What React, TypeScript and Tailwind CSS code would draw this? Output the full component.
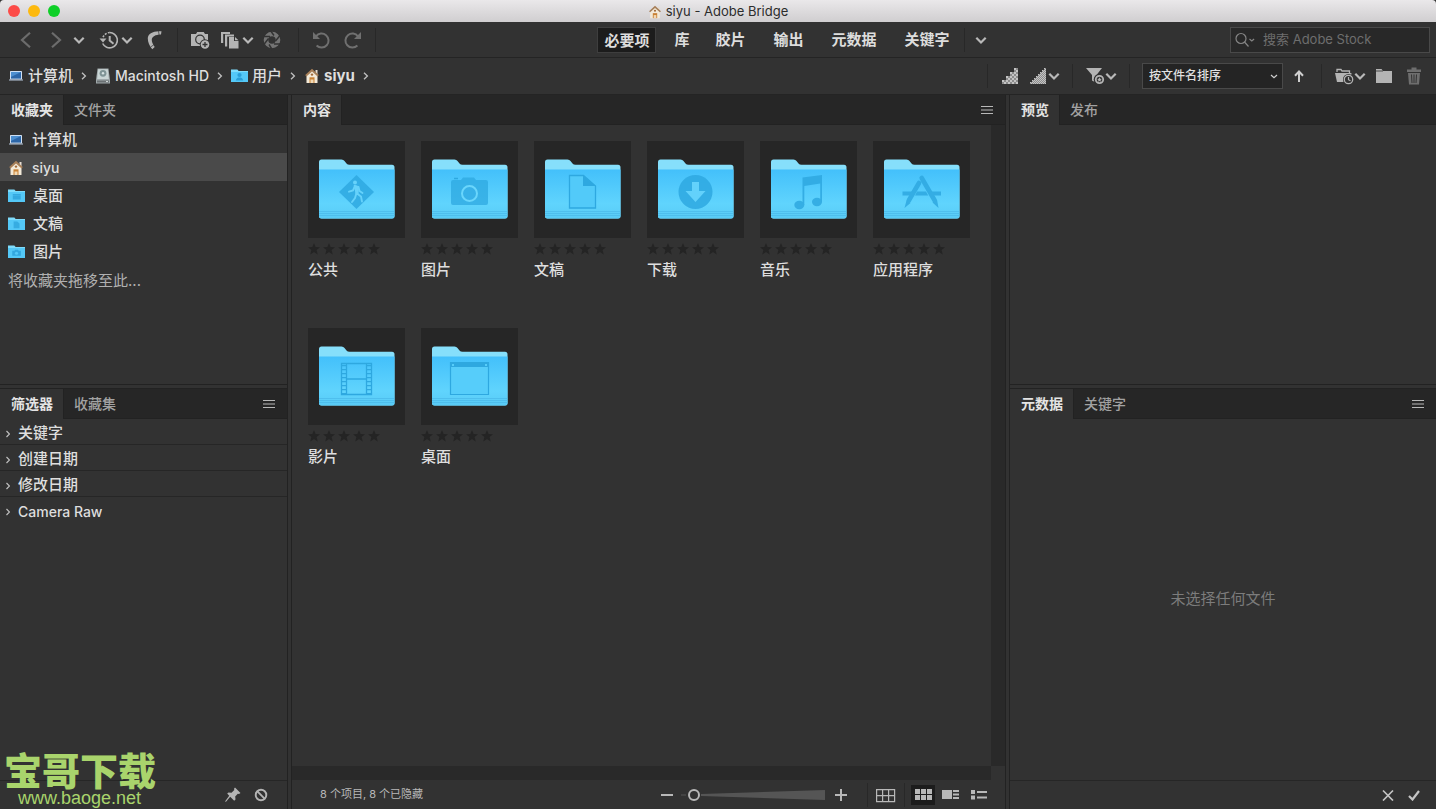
import React from "react";

type Kind = "public" | "pictures" | "documents" | "downloads" | "music" | "apps" | "movies" | "desktop";

const Chevron = () => (
  <svg className="w-3 h-3 shrink-0 text-[#b9b9b9]" viewBox="0 0 12 12" fill="none" stroke="currentColor" strokeWidth="2.2" aria-hidden="true">
    <path d="M1.3 3.8 6 8.5l4.7-4.7" />
  </svg>
);

const Sep = ({ className = "" }: { className?: string }) => <span className={`w-px h-6 shrink-0 bg-[#282828] ${className}`} />;

const IconButton = ({ label, className = "", children }: { label: string; className?: string; children: React.ReactNode }) => (
  <button type="button" aria-label={label} className={`flex shrink-0 items-center justify-center ${className}`}>
    {children}
  </button>
);

const House = ({ className = "w-4 h-4" }: { className?: string }) => (
  <svg className={`shrink-0 ${className}`} viewBox="0 0 16 16" aria-hidden="true">
    <path d="M11.5 2h2v4h-2z" fill="#e6ddd2" />
    <path d="M2.5 7 8 2.5 13.500 7v8h-11z" fill="#f3ead9" />
    <path d="M8 .8 14.8 7l-1.2 1.4L8 3.4 2.4 8.4 1.2 7z" fill="#a77f58" />
    <path d="M5.500 15V9.3h5V15z" fill="#c98235" />
    <path d="M6.500 11.500h3V15h-3z" fill="#f0d9b5" />
    <circle cx="8" cy="6.6" r="1.2" fill="#a06b3c" />
  </svg>
);

const Computer = () => (
  <svg className="w-4 h-4 shrink-0" viewBox="0 0 16 16" aria-hidden="true">
    <rect x="2" y="3" width="12" height="8.5" rx=".6" fill="#cfe0f3" />
    <rect x="3" y="4" width="10" height="6.6" fill="#2c66a8" />
    <path d="M3 4h10L3 9z" fill="#4d8fd0" />
    <path d="M1 11.5h14v1H1z" fill="#b8c8dc" />
  </svg>
);

const Disk = () => (
  <svg className="w-4 h-4 shrink-0" viewBox="0 0 16 16" aria-hidden="true">
    <path d="M2.5.5h11L15 12v3.5H1V12z" fill="#9fa8aa" />
    <path d="M3.2 1.2h9.6l1 9.8H2.2z" fill="#c9d5d5" />
    <circle cx="8" cy="5.3" r="3.4" fill="#7f9496" />
    <circle cx="8" cy="5.3" r="1.2" fill="#d8e4e4" />
    <path d="M2 12.5h12v2H2z" fill="#6a7072" />
    <path d="M11 13h2v1h-2z" fill="#cfd6d6" />
  </svg>
);

const MiniFolder = ({ kind }: { kind: "users" | "desktop" | "documents" | "pictures" }) => (
  <svg className="w-[17px] h-4 shrink-0" viewBox="0 0 16 16" preserveAspectRatio="none" aria-hidden="true">
    <path d="M0 1.5h6L7.2 3H16v11H0z" fill="#7fdcfb" />
    <path d="M0 4h16v10H0z" fill="#54c8f7" />
    <g fill="#2a9fd8">
      {kind === "users" && (
        <>
          <circle cx="8" cy="7" r="2" />
          <path d="M4.5 12.5C5 10 6.5 9.5 8 9.5s3 .5 3.5 3z" />
        </>
      )}
      {kind === "desktop" && <path d="M4.5 6h7.500v1.400H4.500zM4.500 7.800h7.500v3.600H4.500z" opacity=".75" />}
      {kind === "documents" && <path d="M5.300 5.500h3.400L10.800 7.600v4.600H5.300z" opacity=".7" />}
      {kind === "pictures" && (
        <>
          <path d="M4 6.800h2l.8-1h2.500l.8 1h2v5H4z" opacity=".8" />
          <circle cx="8" cy="9.200" r="1.500" fill="#54c8f7" />
        </>
      )}
    </g>
  </svg>
);

const Emblem = ({ kind }: { kind: Kind }) => {
  const ink = "#2ea8e0";
  switch (kind) {
    case "public":
      return (
        <>
          <path d="M48.500 34 66 51 48.500 68 31 51z" fill={ink} opacity=".85" />
          <circle cx="47" cy="41.500" r="2" fill="#66d2fb" />
          <path d="m46.500 45 4 1 1 4 3 2M47 45l-2 4.500-4 1.200M48.500 46l.5 6.500 4 3 1 5M48.500 52l-1.500 5-3 4" stroke="#66d2fb" strokeWidth="1.900" fill="none" strokeLinecap="round" />
          <path d="m46 44 5 1.500-.5 7.500h-3z" fill="#66d2fb" />
        </>
      );
    case "pictures":
      return (
        <>
          <path d="M30 41q0-2 2-2h8l2-2.500h11l2 2.500h10q2 0 2 2v21q0 2-2 2H32q-2 0-2-2z" fill={ink} opacity=".75" />
          <path d="M33 37.500h4" stroke={ink} strokeWidth="1.500" />
          <circle cx="48.500" cy="52.500" r="7.500" fill="#38b1e8" stroke="#6ad6fc" strokeWidth="2" />
        </>
      );
    case "documents":
      return (
        <>
          <path d="M35.500 34.500h14L61.500 45v22h-26z" fill="#52caf9" stroke={ink} strokeWidth="1.300" />
          <path d="M49 34.500V45h12.500z" fill={ink} />
        </>
      );
    case "downloads":
      return (
        <>
          <circle cx="48.500" cy="51" r="17" fill={ink} opacity=".85" />
          <path d="M45 41h7v9h6.500l-10 11-10-11H45z" fill="#63d1fb" />
        </>
      );
    case "music":
      return (
        <g fill={ink} opacity=".85">
          <path d="M42.500 36.500 62 34v27h-1.800V42.500L44.300 45v19h-1.800z" />
          <ellipse cx="39.300" cy="64" rx="5" ry="4.200" />
          <ellipse cx="57" cy="61" rx="5" ry="4.200" />
        </g>
      );
    case "apps":
      return (
        <g opacity=".85">
          <path d="M29.500 50.500H40l-2.200 4h-8.300zM44 50.500h9l2.200 4H42zM58 50.500h10v4h-7.800z" fill={ink} />
          <path d="M46 42 35.800 59.500M48.700 37l13 22.500" stroke={ink} strokeWidth="4.600" strokeLinecap="round" fill="none" />
          <path d="m33.500 59.500-2 7.500 6-5zM59.500 61.500l6 5.500-1.500-8.500z" fill={ink} />
        </g>
      );
    case "movies":
      return (
        <g stroke={ink} fill="none">
          <path d="M33.500 35.500h30v31h-30zM38.500 35v32M58.500 35v32M38.500 51h20" strokeWidth="1.300" />
          <path d="M36 37v29M61 37v29" strokeWidth="4" strokeDasharray="1.200 2.800" />
        </g>
      );
    default:
      return (
        <>
          <path d="M29.500 34.500h38v32h-38z" fill="#56cdfa" stroke={ink} strokeWidth="1.200" />
          <path d="M29 34h39v5H29z" fill={ink} />
          <path d="M31 36h2v2h-2zM64 36h2v2h-2z" fill="#56cdfa" />
        </>
      );
  }
};

const Folder = ({ kind }: { kind: Kind }) => (
  <svg className="w-full h-full" viewBox="0 0 97 97" aria-hidden="true">
    <defs>
      <linearGradient id={`face-${kind}`} x1="0" y1="0" x2="0" y2="1">
        <stop offset="0" stopColor="#43c0fb" />
        <stop offset=".7" stopColor="#60d4fd" />
        <stop offset="1" stopColor="#58cbf6" />
      </linearGradient>
    </defs>
    <path d="M11 21q0-2.500 2.500-2.500h20q2 0 3 1.500l2 2.500q1 1.300 3 1.300h42.500q2.500 0 2.500 2.500V75q0 2.500-2.500 2.500h-70.500Q11 77.500 11 75z" fill="#86dffb" />
    <path d="M11 28.500h75.500V75q0 2.500-2.500 2.500h-70.500Q11 77.500 11 75z" fill={`url(#face-${kind})`} />
    <path d="M11 70.500h75.500M11 72.500h75.500M11 74.500h75.500" stroke="#46b4e6" strokeWidth=".6" />
    <Emblem kind={kind} />
  </svg>
);

const Stars = () => (
  <div className="flex h-[22px] items-center gap-[3px] text-[#242424]" role="img" aria-label="未评级">
    {[0, 1, 2, 3, 4].map((n) => (
      <svg key={n} className="w-3 h-3" viewBox="0 0 12 12" fill="currentColor">
        <path d="m6 0 1.600 4.100 4.400.2-3.400 2.800L9.700 11.500 6 9.100 2.300 11.500l1.100-4.400L0 4.300l4.400-.2z" />
      </svg>
    ))}
  </div>
);

const MenuButton = () => (
  <IconButton label="面板菜单" className="h-5 w-5 text-[#b8b8b8]">
    <svg className="w-3 h-3" viewBox="0 0 12 12" stroke="currentColor" strokeWidth="1" aria-hidden="true">
      <path d="M0 2.500h12M0 6h12M0 9.500h12" />
    </svg>
  </IconButton>
);

const Tabs = ({ names, menu }: { names: string[]; menu?: boolean }) => (
  <div className="flex h-[30px] shrink-0 border-b border-[#222222] bg-[#262626]">
    <div role="tablist" className="flex flex-1">
      {names.map((name, i) =>
        i === 0 ? (
          <button key={name} role="tab" aria-selected="true" type="button" className="-mb-px border-r border-[#222222] bg-[#323232] pl-[11px] pr-2.5 text-sm font-bold text-[#e4e4e4]">
            {name}
          </button>
        ) : (
          <button key={name} role="tab" aria-selected="false" type="button" className="px-2.5 text-sm font-medium text-[#a2a2a2]">
            {name}
          </button>
        )
      )}
    </div>
    {menu && (
      <div className="flex items-center pr-2">
        <MenuButton />
      </div>
    )}
  </div>
);

const Crumb = ({ icon, children }: { icon: React.ReactNode; children: React.ReactNode }) => (
  <li className="flex items-center">
    <a href="#" className="flex items-center gap-1">
      {icon}
      {children}
    </a>
    <svg className="mx-2 h-2 w-1.5 text-[#c0c0c0]" viewBox="0 0 6 8" fill="none" stroke="currentColor" strokeWidth="1.300" aria-hidden="true">
      <path d="m1 .8 3.400 3.200L1 7.200" />
    </svg>
  </li>
);

const stair = (step: number, size: number) => {
  const cells: React.ReactNode[] = [];
  for (let y = 0; y < 16; y += size) {
    for (let x = 0; x < 16; x += size) {
      const top = 16 - (Math.floor(x / step) + 1) * step;
      if (y >= top) {
        const lit = (x / size + y / size) % 2 === 0;
        cells.push(<rect key={`${x}-${y}`} x={x} y={y} width={size} height={size} fill={lit ? "#c4c4c4" : "#8c8c8c"} />);
      }
    }
  }
  return cells;
};

const Undo = ({ flip }: { flip?: boolean }) => (
  <svg className="w-[18px] h-[18px]" viewBox="0 0 18 18" fill="none" stroke="currentColor" strokeWidth="2" aria-hidden="true">
    <g transform={flip ? "translate(18 0) scale(-1 1)" : undefined}>
      <path d="M4 5.300A7 7 0 1 1 4.600 14.500" />
      <path d="M1 1v7h7z" fill="currentColor" stroke="none" />
    </g>
  </svg>
);

const items: { name: string; kind: Kind }[] = [
  { name: "公共", kind: "public" },
  { name: "图片", kind: "pictures" },
  { name: "文稿", kind: "documents" },
  { name: "下载", kind: "downloads" },
  { name: "音乐", kind: "music" },
  { name: "应用程序", kind: "apps" },
  { name: "影片", kind: "movies" },
  { name: "桌面", kind: "desktop" },
];

const favorites: { name: string; icon: React.ReactNode }[] = [
  { name: "计算机", icon: <Computer /> },
  { name: "siyu", icon: <House /> },
  { name: "桌面", icon: <MiniFolder kind="desktop" /> },
  { name: "文稿", icon: <MiniFolder kind="documents" /> },
  { name: "图片", icon: <MiniFolder kind="pictures" /> },
];

const TitleBar = () => (
  <header className="relative flex h-[22px] shrink-0 items-center justify-center rounded-t bg-gradient-to-b from-[#eae8ea] to-[#d0ced0]">
    <div className="absolute left-2 flex gap-2">
      <button type="button" aria-label="关闭" className="h-3 w-3 rounded-full bg-[#fc4b48]" />
      <button type="button" aria-label="最小化" className="h-3 w-3 rounded-full bg-[#fdb90f]" />
      <button type="button" aria-label="缩放" className="h-3 w-3 rounded-full bg-[#0fcf28]" />
    </div>
    <h1 className="flex items-center gap-1 pt-0.5 text-[13px] text-[#2c2c2c]">
      <House className="w-3.5 h-3.5" />
      siyu - Adobe Bridge
    </h1>
  </header>
);

const Toolbar = () => (
  <div className="flex h-9 shrink-0 items-center justify-between border-b border-[#242424] pr-1.5">
    <div className="flex items-center pl-[11px] text-[#b4b4b4]">
      <IconButton label="后退" className="h-6 w-[30px] text-[#6c6c6c]">
        <svg className="w-4 h-4" viewBox="0 0 16 16" fill="none" stroke="currentColor" strokeWidth="2.200"><path d="M12 .8 4 8l8 7.200" /></svg>
      </IconButton>
      <IconButton label="前进" className="h-6 w-[30px] text-[#6c6c6c]">
        <svg className="w-4 h-4" viewBox="0 0 16 16" fill="none" stroke="currentColor" strokeWidth="2.200"><path d="m4 .8 8 7.200-8 7.200" /></svg>
      </IconButton>
      <IconButton label="转到父文件夹" className="h-6 w-4"><Chevron /></IconButton>
      <IconButton label="最近打开" className="ml-2.5 h-6">
        <svg className="w-6 h-6" viewBox="0 0 24 24" fill="none" stroke="currentColor" strokeWidth="1.600">
          <path d="M6 9.200A8 8 0 0 1 12.700 4.500" strokeDasharray="2 1.300" />
          <path d="M12.500 4.500a7.700 7.700 0 1 1-6.800 11" />
          <path d="M12.700 8v4.500l3.800 3.300" strokeWidth="2" />
          <path d="M2.500 10.500h7l-3.500 4z" fill="currentColor" stroke="none" />
        </svg>
        <Chevron />
      </IconButton>
      <IconButton label="返回 Photoshop" className="ml-2.5 h-6 w-6">
        <svg className="w-6 h-6" viewBox="0 0 24 24" fill="currentColor">
          <path d="M18.500 3.300C10.500 2.500 4.800 5.500 4.800 10.500c0 3.500 1.700 7.500 4.500 10.800l2.400-2.300C9.500 16 8.600 13.300 8.800 11.300c.3-2.800 3.700-5 9.200-4.900z" />
          <path d="m15.500 3.200.6 3.400M7.600 19l3.200-2.200" stroke="#323232" strokeWidth=".7" />
        </svg>
      </IconButton>
      <Sep className="ml-2.5" />
      <IconButton label="从相机获取照片" className="ml-2.5 h-6 w-6">
        <svg className="w-6 h-6" viewBox="0 0 24 24" fill="currentColor">
          <path d="M3 6h5l1.200-2h6.500L17 6h3v12H3z" />
          <circle cx="12" cy="11.500" r="4.300" fill="none" stroke="#323232" strokeWidth="1.200" />
          <circle cx="17" cy="16.500" r="5.200" fill="#323232" />
          <circle cx="17" cy="16.500" r="4.300" />
          <path d="M17 14v5M14.500 16.500h5" stroke="#323232" strokeWidth="1.300" />
        </svg>
      </IconButton>
      <IconButton label="优化" className="ml-1.5 h-6">
        <svg className="w-6 h-6" viewBox="0 0 24 24" fill="currentColor">
          <path d="M3 4h9v2H5.200v9H3zM7 6.500h9v2H9.200v10H7z" />
          <path d="M11 9h5v4h4.500v7.500H11z" />
          <path d="m17 9 3.500 3.300H17z" />
        </svg>
        <Chevron />
      </IconButton>
      <IconButton label="在 Camera Raw 中打开" className="ml-1.5 h-6 w-6 text-[#747474]">
        <svg className="w-6 h-6" viewBox="0 0 24 24" fill="none" stroke="currentColor">
          <circle cx="12" cy="12" r="6" strokeWidth="4.600" />
          <path d="m10 2 4 5.500M20 7.500 15.500 13M20.500 16H14M12.500 22 9 16.500M3.500 17l5-6.500M3.500 8.500H10" stroke="#323232" strokeWidth="1.400" />
        </svg>
      </IconButton>
      <Sep className="ml-3.5" />
      <IconButton label="逆时针旋转 90 度" className="ml-2.5 h-6 w-6 text-[#707070]"><Undo /></IconButton>
      <IconButton label="顺时针旋转 90 度" className="ml-2 h-6 w-6 text-[#707070]"><Undo flip /></IconButton>
      <Sep className="ml-2.5" />
    </div>
    <nav className="flex items-center pr-5 text-[15px] font-bold text-[#dddddd]">
      <button type="button" className="h-[26px] border border-[#3e3e3e] bg-[#1c1c1c] px-1.5 pt-0.5">必要项</button>
      {["库", "胶片", "输出", "元数据", "关键字"].map((n, i) => (
        <button key={n} type="button" className={i === 0 ? "ml-1.5 h-[26px] px-3 pt-0.5" : "h-[26px] px-3.5 pt-0.5"}>{n}</button>
      ))}
      <Sep />
      <IconButton label="更多工作区" className="ml-2 h-6 w-4"><Chevron /></IconButton>
    </nav>
    <div className="flex h-[26px] w-[200px] items-center gap-2 border border-[#494949] bg-[#282828] px-1 text-[#858585]">
      <svg className="w-5 h-4 shrink-0" viewBox="0 0 20 16" fill="none" stroke="currentColor" strokeWidth="1.200" aria-hidden="true">
        <circle cx="6" cy="6.500" r="5" />
        <path d="m9.500 10 4 4.500M14.500 7l2.300 2 2.300-2" />
      </svg>
      <input type="search" aria-label="搜索 Adobe Stock" placeholder="搜索 Adobe Stock" className="min-w-0 flex-1 bg-transparent text-[13px] outline-none placeholder:text-[#6e6e6e]" />
    </div>
  </div>
);

const PathBar = () => (
  <div className="flex h-[37px] shrink-0 items-center justify-between border-b border-[#242424] pl-2 pr-3">
    <nav aria-label="路径">
      <ol className="flex items-center text-[15px] font-medium text-[#dedede]">
        <Crumb icon={<Computer />}>计算机</Crumb>
        <Crumb icon={<Disk />}><span className="text-sm">Macintosh HD</span></Crumb>
        <Crumb icon={<MiniFolder kind="users" />}>用户</Crumb>
        <Crumb icon={<House />}><b>siyu</b></Crumb>
      </ol>
    </nav>
    <div className="flex items-center text-[#b4b4b4]">
      <Sep />
      <IconButton label="按评级筛选" className="ml-3 h-6 w-5">
        <svg className="w-4 h-4" viewBox="0 0 16 16">{stair(4, 2)}</svg>
      </IconButton>
      <IconButton label="缩览图品质" className="ml-2.5 h-6">
        <svg className="w-[18px] h-4" viewBox="0 0 18 16">{stair(2, 1)}</svg>
        <Chevron />
      </IconButton>
      <Sep className="ml-3" />
      <IconButton label="筛选项目" className="ml-3 h-6">
        <svg className="w-5 h-5" viewBox="0 0 20 20" fill="currentColor">
          <path d="M1 2h16l-5.500 7v8L7 14.500V9z" />
          <circle cx="14.500" cy="13.500" r="5.800" fill="#323232" />
          <circle cx="14.500" cy="13.500" r="3.700" fill="none" stroke="currentColor" strokeWidth="1.800" />
          <path d="m14.500 11.300.7 1.500 1.600.2-1.200 1.100.3 1.600-1.400-.8-1.400.8.300-1.600-1.200-1.100 1.600-.2z" />
        </svg>
        <Chevron />
      </IconButton>
      <Sep className="ml-3" />
      <div className="relative ml-3">
        <select aria-label="排序方式" className="block h-[26px] w-[141px] appearance-none border border-[#494949] bg-[#242424] px-1.5 text-xs font-medium text-[#e0e0e0] outline-none">
          <option>按文件名排序</option>
        </select>
        <svg className="pointer-events-none absolute right-1 top-2.5 h-2 w-2.5" viewBox="0 0 10 8" fill="none" stroke="#d0d0d0" strokeWidth="1.200" aria-hidden="true">
          <path d="m2 2 3 2.700L8 2" />
        </svg>
      </div>
      <IconButton label="升序" className="ml-1.5 h-6 w-5">
        <svg className="w-3 h-3" viewBox="0 0 12 12" fill="none" stroke="#cfcfcf" strokeWidth="2"><path d="M6 12V2M2 5.700 6 1.500l4 4.200" /></svg>
      </IconButton>
      <Sep className="ml-3" />
      <IconButton label="打开最近使用的文件" className="ml-3 h-6">
        <svg className="w-5 h-5" viewBox="0 0 20 20" fill="currentColor">
          <path d="M3 6V3.500h4l1 1.500h7.500V7" fill="none" stroke="currentColor" strokeWidth="1.300" />
          <path d="M1 7h16.500l-1.300 9H3z" />
          <circle cx="14.500" cy="13.500" r="5.500" fill="#323232" />
          <circle cx="14.500" cy="13.500" r="4.200" fill="none" stroke="currentColor" strokeWidth="1.300" />
          <path d="M14.500 11v2.700l2 1" fill="none" stroke="currentColor" strokeWidth="1.200" />
        </svg>
        <Chevron />
      </IconButton>
      <IconButton label="新建文件夹" className="ml-2 h-6 w-5">
        <svg className="w-4 h-4" viewBox="0 0 16 16" fill="currentColor"><path d="M0 1h5.500L7 3H16v12H0z" /><path d="M0 3h7" stroke="#323232" strokeWidth=".8" /></svg>
      </IconButton>
      <IconButton label="删除" className="ml-2.5 h-6 w-5 text-[#6e6e6e]">
        <svg className="w-4 h-[18px]" viewBox="0 0 16 18" fill="currentColor">
          <path d="M1 2.500h4.500V.5h5v2H15V5H1zM2 6h12l-1 11.500H3z" />
          <path d="M5.500 7.500 6 16M8 7.500V16M10.500 7.500 10 16" stroke="#323232" strokeWidth="1" />
        </svg>
      </IconButton>
    </div>
  </div>
);

const LeftColumn = () => (
  <aside className="flex w-72 shrink-0 flex-col border-r border-[#222222]">
    <section className="flex h-[290px] shrink-0 flex-col border-b border-[#222222]">
      <Tabs names={["收藏夹", "文件夹"]} />
      <ul className="text-[15px] font-medium text-[#dedede]">
        {favorites.map((f, i) => (
          <li key={f.name}>
            <button type="button" className={`flex h-7 w-full items-center gap-2 px-2 pt-0.5 text-left ${i === 1 ? "bg-[#4a4a4a]" : ""}`}>
              {f.icon}
              {i === 1 ? <span className="text-sm">{f.name}</span> : f.name}
            </button>
          </li>
        ))}
      </ul>
      <p className="px-2 pt-0.5 text-[15px] leading-7 text-[#b0b0b0]">将收藏夹拖移至此...</p>
    </section>
    <section className="mt-[3px] flex min-h-0 flex-1 flex-col border-t border-[#222222]">
      <Tabs names={["筛选器", "收藏集"]} menu />
      <ul className="flex-1 text-[15px] font-medium text-[#dedede]">
        {["关键字", "创建日期", "修改日期", "Camera Raw"].map((f, i) => (
          <li key={f} className={i < 3 ? "border-b border-[#262626]" : ""}>
            <button type="button" aria-expanded="false" className="flex h-[25px] w-full items-center gap-2 pl-1.5 pt-1 text-left">
              <svg className="h-2 w-1 text-[#c0c0c0]" viewBox="0 0 4 8" fill="none" stroke="currentColor" strokeWidth="1.200" aria-hidden="true">
                <path d="m.5 1 3 3-3 3" />
              </svg>
              {i === 3 ? <span className="text-sm">{f}</span> : f}
            </button>
          </li>
        ))}
      </ul>
      <footer className="relative flex h-[29px] items-center justify-end gap-2 border-t border-[#262626] pr-4 text-[#b4b4b4]">
        <div className="absolute bottom-px left-1 whitespace-nowrap text-[#a9d46c]">
          <div className="text-[38px] font-black leading-[34px]">宝哥下载</div>
          <div className="pl-3.5 font-['Liberation_Sans',sans-serif] text-lg leading-5">www.baoge.net</div>
        </div>
        <IconButton label="保留筛选器" className="h-5 w-5">
          <svg className="w-4 h-4" viewBox="0 0 16 16" fill="currentColor"><path d="m10 .5 5.500 5.500-1.500 1-1.200-.3-2.600 2.800.3 3-1.300 1.300-4-4L1 14.800l-1-.3 4.200-5.700-2-2.300L3.500 5.500l3 .2L9.300 3 9 1.700z" /></svg>
        </IconButton>
        <IconButton label="清除筛选器" className="h-5 w-5">
          <svg className="w-3.5 h-3.5" viewBox="0 0 14 14" fill="none" stroke="currentColor" strokeWidth="1.900"><circle cx="7" cy="7" r="5.300" /><path d="m3.200 3.200 7.600 7.600" /></svg>
        </IconButton>
      </footer>
    </section>
  </aside>
);

const ContentPanel = () => (
  <main className="mx-[3px] flex min-w-0 flex-1 flex-col border-x border-[#222222]">
    <Tabs names={["内容"]} menu />
    <div className="flex min-h-0 flex-1">
      <ul className="flex min-w-0 flex-1 flex-wrap content-start gap-x-4 gap-y-12 overflow-hidden px-4 pt-4">
        {items.map((it) => (
          <li key={it.name} className="w-[97px]">
            <div className="h-[97px] bg-[#262626]"><Folder kind={it.kind} /></div>
            <Stars />
            <div className="text-[15px] font-medium leading-5 text-[#dedede]">{it.name}</div>
          </li>
        ))}
      </ul>
      <div className="w-[14px] shrink-0 bg-[#292929]" />
    </div>
    <div className="mr-[14px] h-[14px] shrink-0 bg-[#292929]" />
    <footer className="flex h-[29px] shrink-0 items-center justify-between pl-7 pr-3.5 text-[#b8b8b8]">
      <p className="text-[11px] text-[#b8b8b8]">8 个项目, 8 个已隐藏</p>
      <div className="flex items-center">
        <IconButton label="缩小缩览图" className="h-5 w-5">
          <svg className="w-3 h-3" viewBox="0 0 12 12" stroke="currentColor" strokeWidth="2"><path d="M0 6h12" /></svg>
        </IconButton>
        <div className="relative ml-1 flex h-4 w-36 items-center">
          <svg className="absolute inset-0 h-4 w-36" viewBox="0 0 144 16" aria-hidden="true">
            <path d="M0 8h5" stroke="#555555" />
            <path d="M20 7 144 3v10L20 9z" fill="#555555" />
          </svg>
          <input
            type="range"
            aria-label="缩览图大小"
            defaultValue={5}
            className="relative h-4 w-full appearance-none bg-transparent [&::-webkit-slider-thumb]:h-3 [&::-webkit-slider-thumb]:w-3 [&::-webkit-slider-thumb]:appearance-none [&::-webkit-slider-thumb]:rounded-full [&::-webkit-slider-thumb]:border-2 [&::-webkit-slider-thumb]:border-solid [&::-webkit-slider-thumb]:border-[#b8b8b8] [&::-webkit-slider-thumb]:bg-[#323232]"
          />
        </div>
        <IconButton label="放大缩览图" className="ml-1.5 h-5 w-5">
          <svg className="w-3 h-3" viewBox="0 0 12 12" stroke="currentColor" strokeWidth="2"><path d="M0 6h12M6 0v12" /></svg>
        </IconButton>
        <Sep className="ml-4" />
        <IconButton label="锁定网格" className="ml-1.5 h-6 w-6">
          <svg className="w-5 h-4" viewBox="0 0 20 16" fill="none" stroke="currentColor" strokeWidth="1.200"><path d="M.6 2.600h18v12H.6zM6.600 2.600v12M12.600 2.600v12M.6 8.600h18" /></svg>
        </IconButton>
        <Sep className="ml-1.5" />
        <IconButton label="缩览图视图" className="ml-1.5 h-5 w-6 bg-[#1c1c1c]">
          <svg className="w-[17px] h-[11px]" viewBox="0 0 17 11" fill="currentColor"><path d="M0 0h5v5H0zM6 0h5v5H6zM12 0h5v5h-5zM0 6h5v5H0zM6 6h5v5H6zM12 6h5v5h-5z" /></svg>
        </IconButton>
        <IconButton label="详细信息视图" className="ml-1 h-5 w-6">
          <svg className="w-[18px] h-3" viewBox="0 0 18 12" fill="currentColor"><path d="M0 1h10v9H0zM11 1h6v2h-6zM11 4.500h6v2h-6zM11 8h6v2h-6z" /></svg>
        </IconButton>
        <IconButton label="列表视图" className="ml-1 h-5 w-6">
          <svg className="w-4 h-3" viewBox="0 0 16 12" fill="currentColor"><path d="M0 1h4v4H0zM0 6.500h4v4H0zM6 2h10v2H6zM6 7.500h10v2H6z" /></svg>
        </IconButton>
      </div>
    </footer>
  </main>
);

const RightColumn = () => (
  <aside className="flex w-[427px] shrink-0 flex-col border-l border-[#222222]">
    <section className="flex h-[290px] shrink-0 flex-col border-b border-[#222222]">
      <Tabs names={["预览", "发布"]} />
    </section>
    <section className="mt-[3px] flex min-h-0 flex-1 flex-col border-t border-[#222222]">
      <Tabs names={["元数据", "关键字"]} menu />
      <div className="flex flex-1 items-center justify-center text-[15px] text-[#7c7c7c]">未选择任何文件</div>
      <footer className="flex h-[29px] items-center justify-end gap-1.5 border-t border-[#262626] pr-3 text-[#c4c4c4]">
        <IconButton label="取消" className="h-5 w-5">
          <svg className="w-3 h-3" viewBox="0 0 12 12" fill="none" stroke="currentColor" strokeWidth="1.700"><path d="m1 1.500 10 10M11 1.500l-10 10" /></svg>
        </IconButton>
        <IconButton label="应用" className="h-5 w-5">
          <svg className="w-3 h-3" viewBox="0 0 12 12" fill="none" stroke="currentColor" strokeWidth="2.200"><path d="m1 7 3.500 3.500L11 2" /></svg>
        </IconButton>
      </footer>
    </section>
  </aside>
);

export default function App() {
  return (
    <div className="flex h-screen min-w-[1200px] flex-col overflow-hidden bg-[#323232] font-[Inter,'Noto_Sans_CJK_SC',sans-serif]">
      <TitleBar />
      <Toolbar />
      <PathBar />
      <div className="flex min-h-0 flex-1">
        <LeftColumn />
        <ContentPanel />
        <RightColumn />
      </div>
    </div>
  );
}
